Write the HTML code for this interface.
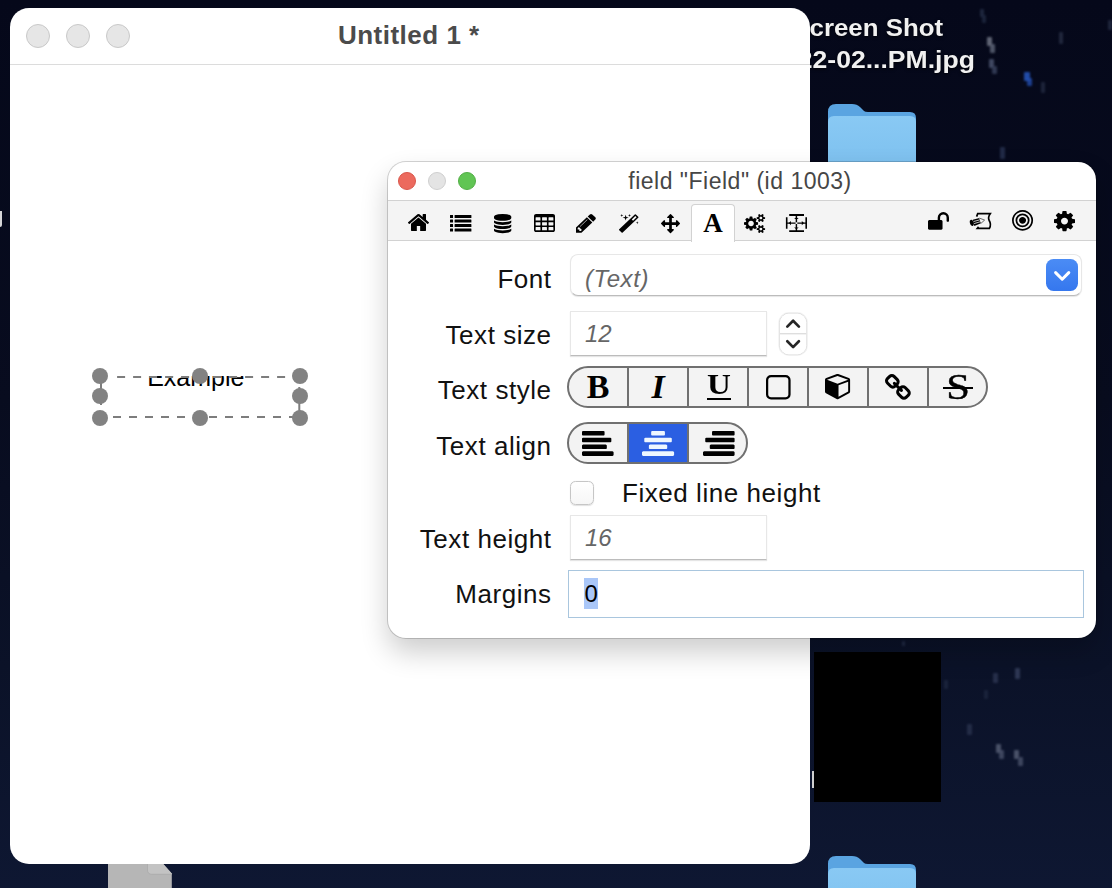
<!DOCTYPE html>
<html lang="en"><head><meta charset="utf-8"><title>Untitled 1 *</title>
<style>
*{box-sizing:border-box;margin:0;padding:0}
html,body{width:1112px;height:888px;overflow:hidden}
body{background:linear-gradient(#05081a 0%,#080c1f 45%,#0b1228 75%,#0e1732 100%);font-family:"Liberation Sans",sans-serif;position:relative}
.abs,.ic{position:absolute;display:block}
.ic{overflow:visible}
.star{position:absolute;background:#3b4560;width:3px;height:5px;opacity:.75;filter:blur(.8px);border-radius:1px}
#main{left:10px;top:8px;width:800px;height:856px;background:#fff;border-radius:19px}
#main .tl{position:absolute;top:16px;width:24px;height:24px;border-radius:50%;background:#e6e6e6;border:1px solid #c9c9c9}
#mtitle{left:-1.2px;top:8px;width:800px;text-align:center;font-weight:bold;font-size:26px;line-height:38px;color:#4b4b4b;letter-spacing:.5px}
#msep{left:0;top:56px;width:800px;height:1px;background:#dcdcdc}
.h{position:absolute;width:16px;height:16px;border-radius:50%;background:#828282}
#insp{left:388px;top:162px;width:708px;height:476px;background:#fff;border-radius:18px;box-shadow:0 0 0 1px rgba(0,0,0,.17),0 14px 28px rgba(0,0,0,.20)}
#insp .tl{position:absolute;top:10px;width:18px;height:18px;border-radius:50%}
#ititle{left:-2px;top:2px;width:708px;text-align:center;font-size:23px;line-height:34px;color:#464646;letter-spacing:.5px}
#tbar{left:0;top:38px;width:708px;height:41px;background:#f4f4f4;border-top:1px solid #d2d2d2;border-bottom:1px solid #d2d2d2}
#tab{left:303px;top:42px;width:44px;height:38px;background:#fff;border:1px solid #d2d2d2;border-bottom:none;border-radius:4px 4px 0 0}
.lbl{position:absolute;right:1112px;white-space:nowrap;font-size:26px;line-height:30px;color:#111;text-align:right;letter-spacing:.55px}
.fld{position:absolute;background:#fff;border:1px solid #e7e7e7;border-bottom-color:#bcbcbc;box-shadow:0 1px 1px rgba(0,0,0,.10)}
.it{position:absolute;font-style:italic;font-size:24px;line-height:28px;color:#666;white-space:nowrap}
.seg{position:absolute;background:#f3f3f3;border:2px solid #707070;border-radius:21px;overflow:hidden}
.div{position:absolute;top:0;width:2px;height:100%;background:#707070}
.ser{position:absolute;font-family:"Liberation Serif",serif;color:#000;white-space:nowrap;text-align:center}
</style></head><body>

<div class="star" style="left:980px;top:9px;width:4px;height:8px;background:#263049"></div>
<div class="star" style="left:982px;top:15px;width:4px;height:8px;background:#222c44"></div>
<div class="star" style="left:986.5px;top:37px;width:5px;height:9px;background:#7d8392"></div>
<div class="star" style="left:990px;top:44px;width:5px;height:9px;background:#666d80"></div>
<div class="star" style="left:989px;top:59px;width:5px;height:9px;background:#525c78"></div>
<div class="star" style="left:992px;top:66px;width:5px;height:8px;background:#3d4763"></div>
<div class="star" style="left:1023.6px;top:71.5px;width:6px;height:9px;background:#2b62d6"></div>
<div class="star" style="left:1027px;top:78px;width:5px;height:8px;background:#2450b4"></div>
<div class="star" style="left:1059px;top:32px;width:4px;height:12px;background:#2a3148"></div>
<div class="star" style="left:1041px;top:82px;width:4px;height:11px;background:#252d45"></div>
<div class="star" style="left:1000px;top:147px;width:5px;height:12px;background:#2a3555"></div>
<div class="star" style="left:1108px;top:20px;width:4px;height:10px;background:#262e46"></div>
<div class="star" style="left:902px;top:641px;width:3px;height:5px;background:#2a3350"></div>
<div class="star" style="left:993px;top:673px;width:5px;height:10px;background:#303956"></div>
<div class="star" style="left:1014.5px;top:668px;width:5px;height:11px;background:#3a4463"></div>
<div class="star" style="left:944px;top:680px;width:4px;height:9px;background:#1f2841"></div>
<div class="star" style="left:967px;top:724px;width:5px;height:11px;background:#2b3450"></div>
<div class="star" style="left:996px;top:744px;width:5px;height:9px;background:#5e667c"></div>
<div class="star" style="left:999px;top:750px;width:5px;height:9px;background:#4c556e"></div>
<div class="star" style="left:1014px;top:750px;width:5px;height:9px;background:#5e667c"></div>
<div class="star" style="left:1018px;top:757px;width:5px;height:9px;background:#4c556e"></div>
<div class="star" style="left:984px;top:690px;width:4px;height:9px;background:#1f2841"></div>
<div class="abs" id="dl1" style="right:169.3px;top:13px;text-align:right;font-weight:bold;font-size:23.5px;line-height:30px;color:#f1f1f1;white-space:nowrap;text-shadow:0 1px 3px rgba(0,0,0,.8);transform:scaleX(1.1);transform-origin:100% 50%">Screen Shot</div>
<div class="abs" id="dl2" style="right:137.4px;top:45px;text-align:right;font-weight:bold;font-size:23.5px;line-height:30px;color:#f1f1f1;white-space:nowrap;text-shadow:0 1px 3px rgba(0,0,0,.8);transform:scaleX(1.13);transform-origin:100% 50%">2022-02...PM.jpg</div>

<svg class="ic" style="left:828px;top:104px" width="88" height="72" viewBox="0 0 88 72">
<defs><linearGradient id="fg104" x1="0" y1="0" x2="0" y2="1"><stop offset="0" stop-color="#89c9f4"/><stop offset="1" stop-color="#7bbfee"/></linearGradient></defs>
<path d="M0 8 Q0 0 8 0 L24 0 Q29 0 32 3 L36 7 Q37 8 40 8 L82 8 Q88 8 88 14 L88 72 L0 72 Z" fill="#5aa4e1"/>
<path d="M0 18 Q0 12 6 12 L82 12 Q88 12 88 18 L88 72 L0 72 Z" fill="url(#fg104)"/></svg>
<svg class="ic" style="left:828px;top:856px" width="88" height="72" viewBox="0 0 88 72">
<defs><linearGradient id="fg856" x1="0" y1="0" x2="0" y2="1"><stop offset="0" stop-color="#89c9f4"/><stop offset="1" stop-color="#7bbfee"/></linearGradient></defs>
<path d="M0 8 Q0 0 8 0 L24 0 Q29 0 32 3 L36 7 Q37 8 40 8 L82 8 Q88 8 88 14 L88 72 L0 72 Z" fill="#5aa4e1"/>
<path d="M0 18 Q0 12 6 12 L82 12 Q88 12 88 18 L88 72 L0 72 Z" fill="url(#fg856)"/></svg>
<div class="abs" style="left:814px;top:652px;width:127px;height:150px;background:#000"></div>
<div class="abs" style="left:812px;top:771px;width:2px;height:17px;background:#cfcfcf"></div>
<div class="abs" style="left:0;top:211px;width:2.2px;height:16px;background:#d6d6d8;border-radius:0 0 2px 0"></div>
<svg class="ic" style="left:108px;top:858px" width="64" height="30" viewBox="0 0 64 30"><path d="M0 0 L49.9 0 L63.8 15.4 L63.8 30 L0 30 Z" fill="#b6b6b6"/><path d="M39.5 0 L39.5 12 Q39.5 16.3 44 16.3 L63.8 16.3 L63.8 15.4 L49.9 0 Z" fill="#c3c3c3"/><path d="M39.5 0 L39.5 12 Q39.5 16.3 44 16.3 L63.8 16.3" fill="none" stroke="#a9a9a9" stroke-width=".8"/></svg>
<div class="abs" id="main">
<div class="tl" style="left:16px"></div>
<div class="tl" style="left:56px"></div>
<div class="tl" style="left:96px"></div>
<div class="abs" id="mtitle">Untitled 1 *</div><div class="abs" id="msep"></div>
<div class="abs" style="left:90px;top:368.3px;width:200px;height:16px;overflow:hidden"><div id="ex" style="position:absolute;left:-4.2px;width:200px;top:-13px;text-align:center;font-size:25px;line-height:28px;color:#000">Example</div></div>
<svg class="ic" style="left:80px;top:358px" width="220" height="62" viewBox="80 358 220 62"><g stroke="#7d7d7d" stroke-width="2" fill="none">
<path d="M107.1 369 H290" stroke-dasharray="8 8"/><path d="M103 409 H290" stroke-dasharray="8 8"/>
<path d="M91 373 V381 M91 389 V397 M289.3 379 V387 M289.3 395 V403"/></g></svg>
<div class="h" style="left:82px;top:360px"></div>
<div class="h" style="left:82px;top:380px"></div>
<div class="h" style="left:82px;top:402px"></div>
<div class="h" style="left:182px;top:360px"></div>
<div class="h" style="left:182px;top:402px"></div>
<div class="h" style="left:282px;top:360px"></div>
<div class="h" style="left:282px;top:380px"></div>
<div class="h" style="left:282px;top:402px"></div>
</div>
<div class="abs" id="insp">
<div class="tl" style="left:10px;background:#ec6a5e;border:1px solid #d9564b"></div><div class="tl" style="left:40px;background:#e4e4e4;border:1px solid #cfcfcf"></div><div class="tl" style="left:70px;background:#61c554;border:1px solid #52ae46"></div>
<div class="abs" id="ititle">field "Field" (id 1003)</div>
<div class="abs" id="tbar"></div><div class="abs" id="tab"></div>
</div>
<svg class="ic" style="left:407.90px;top:214.40px" width="21.00" height="17.00" viewBox="25.9 -1283.0 1612.2 1283.0" preserveAspectRatio="none"><path transform="scale(1,-1)" fill="#000" d="M1408 544v-480q0 -26 -19 -45t-45 -19h-384v384h-256v-384h-384q-26 0 -45 19t-19 45v480q0 1 0.5 3t0.5 3l575 474l575 -474q1 -2 1 -6zM1631 613l-62 -74q-8 -9 -21 -11h-3q-13 0 -21 7l-692 577l-692 -577q-12 -8 -24 -7q-13 2 -21 11l-62 74q-8 10 -7 23.5t11 21.5 l719 599q32 26 76 26t76 -26l244 -204v195q0 14 9 23t23 9h192q14 0 23 -9t9 -23v-408l219 -182q10 -8 11 -21.5t-7 -23.5z"/></svg>
<svg class="ic" style="left:449.80px;top:214.70px" width="21.40" height="16.60" viewBox="0.0 -1408.0 1792.0 1408.0" preserveAspectRatio="none"><path transform="scale(1,-1)" fill="#000" d="M256 224v-192q0 -13 -9.5 -22.5t-22.5 -9.5h-192q-13 0 -22.5 9.5t-9.5 22.5v192q0 13 9.5 22.5t22.5 9.5h192q13 0 22.5 -9.5t9.5 -22.5zM256 608v-192q0 -13 -9.5 -22.5t-22.5 -9.5h-192q-13 0 -22.5 9.5t-9.5 22.5v192q0 13 9.5 22.5t22.5 9.5h192q13 0 22.5 -9.5 t9.5 -22.5zM256 992v-192q0 -13 -9.5 -22.5t-22.5 -9.5h-192q-13 0 -22.5 9.5t-9.5 22.5v192q0 13 9.5 22.5t22.5 9.5h192q13 0 22.5 -9.5t9.5 -22.5zM1792 224v-192q0 -13 -9.5 -22.5t-22.5 -9.5h-1344q-13 0 -22.5 9.5t-9.5 22.5v192q0 13 9.5 22.5t22.5 9.5h1344 q13 0 22.5 -9.5t9.5 -22.5zM256 1376v-192q0 -13 -9.5 -22.5t-22.5 -9.5h-192q-13 0 -22.5 9.5t-9.5 22.5v192q0 13 9.5 22.5t22.5 9.5h192q13 0 22.5 -9.5t9.5 -22.5zM1792 608v-192q0 -13 -9.5 -22.5t-22.5 -9.5h-1344q-13 0 -22.5 9.5t-9.5 22.5v192q0 13 9.5 22.5 t22.5 9.5h1344q13 0 22.5 -9.5t9.5 -22.5zM1792 992v-192q0 -13 -9.5 -22.5t-22.5 -9.5h-1344q-13 0 -22.5 9.5t-9.5 22.5v192q0 13 9.5 22.5t22.5 9.5h1344q13 0 22.5 -9.5t9.5 -22.5zM1792 1376v-192q0 -13 -9.5 -22.5t-22.5 -9.5h-1344q-13 0 -22.5 9.5t-9.5 22.5v192 q0 13 9.5 22.5t22.5 9.5h1344q13 0 22.5 -9.5t9.5 -22.5z"/></svg>
<svg class="ic" style="left:493.70px;top:213.50px" width="17.30" height="19.20" viewBox="0.0 -1536.0 1536.0 1792.0" preserveAspectRatio="none"><path transform="scale(1,-1)" fill="#000" d="M768 768q237 0 443 43t325 127v-170q0 -69 -103 -128t-280 -93.5t-385 -34.5t-385 34.5t-280 93.5t-103 128v170q119 -84 325 -127t443 -43zM768 0q237 0 443 43t325 127v-170q0 -69 -103 -128t-280 -93.5t-385 -34.5t-385 34.5t-280 93.5t-103 128v170q119 -84 325 -127 t443 -43zM768 384q237 0 443 43t325 127v-170q0 -69 -103 -128t-280 -93.5t-385 -34.5t-385 34.5t-280 93.5t-103 128v170q119 -84 325 -127t443 -43zM768 1536q208 0 385 -34.5t280 -93.5t103 -128v-128q0 -69 -103 -128t-280 -93.5t-385 -34.5t-385 34.5t-280 93.5 t-103 128v128q0 69 103 128t280 93.5t385 34.5z"/></svg>
<svg class="ic" style="left:534.00px;top:214.00px" width="21.00" height="18.00" viewBox="0.0 -1408.0 1664.0 1408.0" preserveAspectRatio="none"><path transform="scale(1,-1)" fill="#000" d="M512 160v192q0 14 -9 23t-23 9h-320q-14 0 -23 -9t-9 -23v-192q0 -14 9 -23t23 -9h320q14 0 23 9t9 23zM512 544v192q0 14 -9 23t-23 9h-320q-14 0 -23 -9t-9 -23v-192q0 -14 9 -23t23 -9h320q14 0 23 9t9 23zM1024 160v192q0 14 -9 23t-23 9h-320q-14 0 -23 -9t-9 -23 v-192q0 -14 9 -23t23 -9h320q14 0 23 9t9 23zM512 928v192q0 14 -9 23t-23 9h-320q-14 0 -23 -9t-9 -23v-192q0 -14 9 -23t23 -9h320q14 0 23 9t9 23zM1024 544v192q0 14 -9 23t-23 9h-320q-14 0 -23 -9t-9 -23v-192q0 -14 9 -23t23 -9h320q14 0 23 9t9 23zM1536 160v192 q0 14 -9 23t-23 9h-320q-14 0 -23 -9t-9 -23v-192q0 -14 9 -23t23 -9h320q14 0 23 9t9 23zM1024 928v192q0 14 -9 23t-23 9h-320q-14 0 -23 -9t-9 -23v-192q0 -14 9 -23t23 -9h320q14 0 23 9t9 23zM1536 544v192q0 14 -9 23t-23 9h-320q-14 0 -23 -9t-9 -23v-192 q0 -14 9 -23t23 -9h320q14 0 23 9t9 23zM1536 928v192q0 14 -9 23t-23 9h-320q-14 0 -23 -9t-9 -23v-192q0 -14 9 -23t23 -9h320q14 0 23 9t9 23zM1664 1248v-1088q0 -66 -47 -113t-113 -47h-1344q-66 0 -113 47t-47 113v1088q0 66 47 113t113 47h1344q66 0 113 -47t47 -113 z"/></svg>
<svg class="ic" style="left:576.40px;top:213.70px" width="19.80" height="18.70" viewBox="0.0 -1387.0 1515.0 1515.0" preserveAspectRatio="none"><path transform="scale(1,-1)" fill="#000" d="M363 0l91 91l-235 235l-91 -91v-107h128v-128h107zM886 928q0 22 -22 22q-10 0 -17 -7l-542 -542q-7 -7 -7 -17q0 -22 22 -22q10 0 17 7l542 542q7 7 7 17zM832 1120l416 -416l-832 -832h-416v416zM1515 1024q0 -53 -37 -90l-166 -166l-416 416l166 165q36 38 90 38 q53 0 91 -38l235 -234q37 -39 37 -91z"/></svg>
<svg class="ic" style="left:618.50px;top:213.70px" width="19.80" height="18.70" viewBox="27.0 -1536.0 1637.0 1637.0" preserveAspectRatio="none"><path transform="scale(1,-1)" fill="#000" d="M1190 955l293 293l-107 107l-293 -293zM1637 1248q0 -27 -18 -45l-1286 -1286q-18 -18 -45 -18t-45 18l-198 198q-18 18 -18 45t18 45l1286 1286q18 18 45 18t45 -18l198 -198q18 -18 18 -45zM286 1438l98 -30l-98 -30l-30 -98l-30 98l-98 30l98 30l30 98zM636 1276 l196 -60l-196 -60l-60 -196l-60 196l-196 60l196 60l60 196zM1566 798l98 -30l-98 -30l-30 -98l-30 98l-98 30l98 30l30 98zM926 1438l98 -30l-98 -30l-30 -98l-30 98l-98 30l98 30l30 98z"/></svg>
<svg class="ic" style="left:661.00px;top:213.70px" width="19.00" height="19.20" viewBox="0.0 -1536.0 1792.0 1792.0" preserveAspectRatio="none"><path transform="scale(1,-1)" fill="#000" d="M1792 640q0 -26 -19 -45l-256 -256q-19 -19 -45 -19t-45 19t-19 45v128h-384v-384h128q26 0 45 -19t19 -45t-19 -45l-256 -256q-19 -19 -45 -19t-45 19l-256 256q-19 19 -19 45t19 45t45 19h128v384h-384v-128q0 -26 -19 -45t-45 -19t-45 19l-256 256q-19 19 -19 45 t19 45l256 256q19 19 45 19t45 -19t19 -45v-128h384v384h-128q-26 0 -45 19t-19 45t19 45l256 256q19 19 45 19t45 -19l256 -256q19 -19 19 -45t-19 -45t-45 -19h-128v-384h384v128q0 26 19 45t45 19t45 -19l256 -256q19 -19 19 -45z"/></svg>
<div class="ser" id="tA" style="left:691px;top:205px;width:44px;font-weight:bold;font-size:27px;line-height:36px">A</div>
<svg class="ic" style="left:744.20px;top:213.50px" width="21.10" height="19.00" viewBox="0.0 -1520.0 1920.0 1761.0" preserveAspectRatio="none"><path transform="scale(1,-1)" fill="#000" d="M896 640q0 106 -75 181t-181 75t-181 -75t-75 -181t75 -181t181 -75t181 75t75 181zM1664 128q0 52 -38 90t-90 38t-90 -38t-38 -90q0 -53 37.5 -90.5t90.5 -37.5t90.5 37.5t37.5 90.5zM1664 1152q0 52 -38 90t-90 38t-90 -38t-38 -90q0 -53 37.5 -90.5t90.5 -37.5 t90.5 37.5t37.5 90.5zM1280 731v-185q0 -10 -7 -19.5t-16 -10.5l-155 -24q-11 -35 -32 -76q34 -48 90 -115q7 -11 7 -20q0 -12 -7 -19q-23 -30 -82.5 -89.5t-78.5 -59.5q-11 0 -21 7l-115 90q-37 -19 -77 -31q-11 -108 -23 -155q-7 -24 -30 -24h-186q-11 0 -20 7.5t-10 17.5 l-23 153q-34 10 -75 31l-118 -89q-7 -7 -20 -7q-11 0 -21 8q-144 133 -144 160q0 9 7 19q10 14 41 53t47 61q-23 44 -35 82l-152 24q-10 1 -17 9.5t-7 19.5v185q0 10 7 19.5t16 10.5l155 24q11 35 32 76q-34 48 -90 115q-7 11 -7 20q0 12 7 20q22 30 82 89t79 59q11 0 21 -7 l115 -90q34 18 77 32q11 108 23 154q7 24 30 24h186q11 0 20 -7.5t10 -17.5l23 -153q34 -10 75 -31l118 89q8 7 20 7q11 0 21 -8q144 -133 144 -160q0 -8 -7 -19q-12 -16 -42 -54t-45 -60q23 -48 34 -82l152 -23q10 -2 17 -10.5t7 -19.5zM1920 198v-140q0 -16 -149 -31 q-12 -27 -30 -52q51 -113 51 -138q0 -4 -4 -7q-122 -71 -124 -71q-8 0 -46 47t-52 68q-20 -2 -30 -2t-30 2q-14 -21 -52 -68t-46 -47q-2 0 -124 71q-4 3 -4 7q0 25 51 138q-18 25 -30 52q-149 15 -149 31v140q0 16 149 31q13 29 30 52q-51 113 -51 138q0 4 4 7q4 2 35 20 t59 34t30 16q8 0 46 -46.5t52 -67.5q20 2 30 2t30 -2q51 71 92 112l6 2q4 0 124 -70q4 -3 4 -7q0 -25 -51 -138q17 -23 30 -52q149 -15 149 -31zM1920 1222v-140q0 -16 -149 -31q-12 -27 -30 -52q51 -113 51 -138q0 -4 -4 -7q-122 -71 -124 -71q-8 0 -46 47t-52 68 q-20 -2 -30 -2t-30 2q-14 -21 -52 -68t-46 -47q-2 0 -124 71q-4 3 -4 7q0 25 51 138q-18 25 -30 52q-149 15 -149 31v140q0 16 149 31q13 29 30 52q-51 113 -51 138q0 4 4 7q4 2 35 20t59 34t30 16q8 0 46 -46.5t52 -67.5q20 2 30 2t30 -2q51 71 92 112l6 2q4 0 124 -70 q4 -3 4 -7q0 -25 -51 -138q17 -23 30 -52q149 -15 149 -31z"/></svg>
<svg class="ic" style="left:784px;top:212px" width="26" height="23" viewBox="784 212 26 23"><g stroke="#000" fill="none">
<path d="M789.2 215 H804 M789.2 231.1 H804" stroke-width="1.9"/><path d="M786.7 217.2 V228.8 M806.2 217.2 V228.8" stroke-width="1.6"/>
<path d="M796.4 215 V222.2 M796.4 224 V231 M787 223.1 H795.6 M797.3 223.1 H806" stroke-width="1.45"/></g>
<path d="M794.1 219 L796.4 217.2 L798.7 219 Z M794.1 227.4 L796.4 229.2 L798.7 227.4 Z M791 221 L788.8 223.1 L791 225.2 Z M801.8 221 L804 223.1 L801.8 225.2 Z" fill="#000"/></svg>
<svg class="ic" style="left:927.90px;top:212.00px" width="21.00" height="17.70" viewBox="0.0 -1408.0 1664.0 1408.0" preserveAspectRatio="none"><path transform="scale(1,-1)" fill="#000" d="M1664 960v-256q0 -26 -19 -45t-45 -19h-64q-26 0 -45 19t-19 45v256q0 106 -75 181t-181 75t-181 -75t-75 -181v-192h96q40 0 68 -28t28 -68v-576q0 -40 -28 -68t-68 -28h-960q-40 0 -68 28t-28 68v576q0 40 28 68t68 28h672v192q0 185 131.5 316.5t316.5 131.5 t316.5 -131.5t131.5 -316.5z"/></svg>
<svg class="ic" style="left:960px;top:203px" width="40" height="35" viewBox="0 0 40 35"><path d="M16.6 13.6 L17.7 10.7 H30.2 Q27.6 14.4 29.2 17.5 Q31.6 21.6 29.4 25.3 H17.4 L18.6 23.9" fill="none" stroke="#000" stroke-width="1.7" stroke-linejoin="miter"/>
<ellipse cx="11.8" cy="19.8" rx="1.9" ry="3.2" transform="rotate(-14 11.8 19.8)" fill="#000"/>
<path d="M12.8 16.8 L19.4 15.1 L21 20.3 L14.3 22.9 Z" fill="#000"/>
<path d="M13.6 18.5 L19.9 16.8 M14.1 20.6 L20.4 18.7" stroke="#f4f4f4" stroke-width=".8"/>
<path d="M19.4 15.1 L24.6 17.1 L21 20.3" fill="#f4f4f4" stroke="#444" stroke-width=".8" stroke-linejoin="round"/></svg>
<svg class="ic" style="left:1011.90px;top:210.30px" width="21.10" height="20.70" viewBox="0.0 -1408.0 1536.0 1536.0" preserveAspectRatio="none"><path transform="scale(1,-1)" fill="#000" d="M1024 640q0 -106 -75 -181t-181 -75t-181 75t-75 181t75 181t181 75t181 -75t75 -181zM1152 640q0 159 -112.5 271.5t-271.5 112.5t-271.5 -112.5t-112.5 -271.5t112.5 -271.5t271.5 -112.5t271.5 112.5t112.5 271.5zM1280 640q0 -212 -150 -362t-362 -150t-362 150 t-150 362t150 362t362 150t362 -150t150 -362zM1408 640q0 130 -51 248.5t-136.5 204t-204 136.5t-248.5 51t-248.5 -51t-204 -136.5t-136.5 -204t-51 -248.5t51 -248.5t136.5 -204t204 -136.5t248.5 -51t248.5 51t204 136.5t136.5 204t51 248.5zM1536 640 q0 -209 -103 -385.5t-279.5 -279.5t-385.5 -103t-385.5 103t-279.5 279.5t-103 385.5t103 385.5t279.5 279.5t385.5 103t385.5 -103t279.5 -279.5t103 -385.5z"/></svg>
<svg class="ic" style="left:1053.80px;top:210.80px" width="21.00" height="20.20" viewBox="0.0 -1408.0 1536.0 1536.0" preserveAspectRatio="none"><path transform="scale(1,-1)" fill="#000" d="M1024 640q0 106 -75 181t-181 75t-181 -75t-75 -181t75 -181t181 -75t181 75t75 181zM1536 749v-222q0 -12 -8 -23t-20 -13l-185 -28q-19 -54 -39 -91q35 -50 107 -138q10 -12 10 -25t-9 -23q-27 -37 -99 -108t-94 -71q-12 0 -26 9l-138 108q-44 -23 -91 -38 q-16 -136 -29 -186q-7 -28 -36 -28h-222q-14 0 -24.5 8.5t-11.5 21.5l-28 184q-49 16 -90 37l-141 -107q-10 -9 -25 -9q-14 0 -25 11q-126 114 -165 168q-7 10 -7 23q0 12 8 23q15 21 51 66.5t54 70.5q-27 50 -41 99l-183 27q-13 2 -21 12.5t-8 23.5v222q0 12 8 23t19 13 l186 28q14 46 39 92q-40 57 -107 138q-10 12 -10 24q0 10 9 23q26 36 98.5 107.5t94.5 71.5q13 0 26 -10l138 -107q44 23 91 38q16 136 29 186q7 28 36 28h222q14 0 24.5 -8.5t11.5 -21.5l28 -184q49 -16 90 -37l142 107q9 9 24 9q13 0 25 -10q129 -119 165 -170q7 -8 7 -22 q0 -12 -8 -23q-15 -21 -51 -66.5t-54 -70.5q26 -50 41 -98l183 -28q13 -2 21 -12.5t8 -23.5z"/></svg>
<div class="lbl" style="right:560.4px;top:263.5px">Font</div>
<div class="lbl" style="right:560.4px;top:319.5px">Text size</div>
<div class="lbl" style="right:560.4px;top:375.0px">Text style</div>
<div class="lbl" style="right:560.4px;top:431.0px">Text align</div>
<div class="lbl" style="right:560.4px;top:523.6px">Text height</div>
<div class="lbl" style="right:560.4px;top:579.1px">Margins</div>
<div class="fld" style="left:569.5px;top:254px;width:512.5px;height:41.5px;border-radius:8px"></div>
<div class="it" style="left:585px;top:265px;letter-spacing:.6px">(Text)</div>
<svg class="ic" style="left:1046px;top:259px" width="32" height="32" viewBox="0 0 32 32"><defs><linearGradient id="bg" x1="0" y1="0" x2="0" y2="1"><stop offset="0" stop-color="#4b8cf5"/><stop offset="1" stop-color="#3577ee"/></linearGradient></defs><rect width="32" height="32" rx="7.5" fill="url(#bg)"/><path d="M9.6 13.6 L16.2 20.2 L22.8 13.6" fill="none" stroke="#fff" stroke-width="3" stroke-linecap="round" stroke-linejoin="round"/></svg>
<div class="fld" style="left:569.5px;top:311.3px;width:197px;height:45px"></div>
<div class="it" style="left:585px;top:320px">12</div>
<svg class="ic" style="left:778px;top:312px" width="31" height="45" viewBox="778 312 31 45"><rect x="779.8" y="313.6" width="26.6" height="40.8" rx="9" fill="#fff" stroke="#e3e3e3" stroke-width="1"/><rect x="779.8" y="313.6" width="26.6" height="40.8" rx="9" fill="none" stroke="#000" stroke-opacity=".06" stroke-width="3"/><rect x="779.8" y="313.6" width="26.6" height="40.8" rx="9" fill="#fff"/><path d="M780 333.7 H806.2" stroke="#dedede" stroke-width="1.4"/>
<path d="M787.3 326.6 L793.1 320.8 L798.9 326.6 M787.3 341.3 L793.1 347.1 L798.9 341.3" fill="none" stroke="#262626" stroke-width="2.7" stroke-linecap="round" stroke-linejoin="round"/></svg>
<div class="seg" style="left:567px;top:366px;width:421px;height:42px">
<div class="div" style="left:58px"></div>
<div class="div" style="left:118px"></div>
<div class="div" style="left:178px"></div>
<div class="div" style="left:238px"></div>
<div class="div" style="left:298px"></div>
<div class="div" style="left:358px"></div>
</div>
<div class="ser" style="left:568px;top:366px;width:60px;font-weight:bold;font-size:34px;line-height:42px">B</div>
<div class="ser" style="left:628px;top:366px;width:60px;font-weight:bold;font-style:italic;font-size:34px;line-height:42px">I</div>
<div class="ser" style="left:688.5px;top:362.5px;width:60px;font-weight:bold;font-size:29px;line-height:42px;transform:scaleX(1.14)">U</div><div class="abs" style="left:706.5px;top:397.5px;width:24px;height:2px;background:#000"></div>
<svg class="ic" style="left:765.70px;top:374.90px" width="24.60" height="24.50" viewBox="0.0 -1408.0 1408.0 1408.0" preserveAspectRatio="none"><path transform="scale(1,-1)" fill="#000" d="M1120 1280h-832q-66 0 -113 -47t-47 -113v-832q0 -66 47 -113t113 -47h832q66 0 113 47t47 113v832q0 66 -47 113t-113 47zM1408 1120v-832q0 -119 -84.5 -203.5t-203.5 -84.5h-832q-119 0 -203.5 84.5t-84.5 203.5v832q0 119 84.5 203.5t203.5 84.5h832 q119 0 203.5 -84.5t84.5 -203.5z"/></svg>
<svg class="ic" style="left:825.30px;top:374.20px" width="25.10" height="25.20" viewBox="0.0 -1408.0 1664.0 1664.0" preserveAspectRatio="none"><path transform="scale(1,-1)" fill="#000" d="M896 -93l640 349v636l-640 -233v-752zM832 772l698 254l-698 254l-698 -254zM1664 1024v-768q0 -35 -18 -65t-49 -47l-704 -384q-28 -16 -61 -16t-61 16l-704 384q-31 17 -49 47t-18 65v768q0 40 23 73t61 47l704 256q22 8 44 8t44 -8l704 -256q38 -14 61 -47t23 -73z"/></svg>
<svg class="ic" style="left:885.20px;top:374.00px" width="25.80" height="25.80" viewBox="16.0 -1520.0 1632.0 1632.0" preserveAspectRatio="none"><path transform="scale(1,-1)" fill="#000" d="M1456 320q0 40 -28 68l-208 208q-28 28 -68 28q-42 0 -72 -32q3 -3 19 -18.5t21.5 -21.5t15 -19t13 -25.5t3.5 -27.5q0 -40 -28 -68t-68 -28q-15 0 -27.5 3.5t-25.5 13t-19 15t-21.5 21.5t-18.5 19q-33 -31 -33 -73q0 -40 28 -68l206 -207q27 -27 68 -27q40 0 68 26 l147 146q28 28 28 67zM753 1025q0 40 -28 68l-206 207q-28 28 -68 28q-39 0 -68 -27l-147 -146q-28 -28 -28 -67q0 -40 28 -68l208 -208q27 -27 68 -27q42 0 72 31q-3 3 -19 18.5t-21.5 21.5t-15 19t-13 25.5t-3.5 27.5q0 40 28 68t68 28q15 0 27.5 -3.5t25.5 -13t19 -15 t21.5 -21.5t18.5 -19q33 31 33 73zM1648 320q0 -120 -85 -203l-147 -146q-83 -83 -203 -83q-121 0 -204 85l-206 207q-83 83 -83 203q0 123 88 209l-88 88q-86 -88 -208 -88q-120 0 -204 84l-208 208q-84 84 -84 204t85 203l147 146q83 83 203 83q121 0 204 -85l206 -207 q83 -83 83 -203q0 -123 -88 -209l88 -88q86 88 208 88q120 0 204 -84l208 -208q84 -84 84 -204z"/></svg>
<div class="ser" style="left:928.2px;top:365.8px;width:60px;font-size:35.5px;line-height:42px;-webkit-text-stroke:.4px #000;transform:scaleX(1.2)">S</div><div class="abs" style="left:943px;top:387px;width:29.7px;height:2px;background:#000"></div>
<div class="seg" style="left:567px;top:422px;width:181px;height:42px"><div class="abs" style="left:58px;top:0;width:62px;height:100%;background:#2b5fe2"></div><div class="div" style="left:58px"></div><div class="div" style="left:118px"></div></div>
<svg class="ic" style="left:582.20px;top:430.60px" width="31.60" height="24.90" viewBox="0.0 -1408.0 1792.0 1408.0" preserveAspectRatio="none"><path transform="scale(1,-1)" fill="#000" d="M1792 192v-128q0 -26 -19 -45t-45 -19h-1664q-26 0 -45 19t-19 45v128q0 26 19 45t45 19h1664q26 0 45 -19t19 -45zM1408 576v-128q0 -26 -19 -45t-45 -19h-1280q-26 0 -45 19t-19 45v128q0 26 19 45t45 19h1280q26 0 45 -19t19 -45zM1664 960v-128q0 -26 -19 -45 t-45 -19h-1536q-26 0 -45 19t-19 45v128q0 26 19 45t45 19h1536q26 0 45 -19t19 -45zM1280 1344v-128q0 -26 -19 -45t-45 -19h-1152q-26 0 -45 19t-19 45v128q0 26 19 45t45 19h1152q26 0 45 -19t19 -45z"/></svg>
<svg class="ic" style="left:642.10px;top:430.60px" width="32.10" height="24.90" viewBox="0.0 -1408.0 1792.0 1408.0" preserveAspectRatio="none"><path transform="scale(1,-1)" fill="#eef7ff" d="M1792 192v-128q0 -26 -19 -45t-45 -19h-1664q-26 0 -45 19t-19 45v128q0 26 19 45t45 19h1664q26 0 45 -19t19 -45zM1408 576v-128q0 -26 -19 -45t-45 -19h-896q-26 0 -45 19t-19 45v128q0 26 19 45t45 19h896q26 0 45 -19t19 -45zM1664 960v-128q0 -26 -19 -45t-45 -19 h-1408q-26 0 -45 19t-19 45v128q0 26 19 45t45 19h1408q26 0 45 -19t19 -45zM1280 1344v-128q0 -26 -19 -45t-45 -19h-640q-26 0 -45 19t-19 45v128q0 26 19 45t45 19h640q26 0 45 -19t19 -45z"/></svg>
<svg class="ic" style="left:702.50px;top:430.60px" width="31.60" height="24.90" viewBox="0.0 -1408.0 1792.0 1408.0" preserveAspectRatio="none"><path transform="scale(1,-1)" fill="#000" d="M1792 192v-128q0 -26 -19 -45t-45 -19h-1664q-26 0 -45 19t-19 45v128q0 26 19 45t45 19h1664q26 0 45 -19t19 -45zM1792 576v-128q0 -26 -19 -45t-45 -19h-1280q-26 0 -45 19t-19 45v128q0 26 19 45t45 19h1280q26 0 45 -19t19 -45zM1792 960v-128q0 -26 -19 -45 t-45 -19h-1536q-26 0 -45 19t-19 45v128q0 26 19 45t45 19h1536q26 0 45 -19t19 -45zM1792 1344v-128q0 -26 -19 -45t-45 -19h-1152q-26 0 -45 19t-19 45v128q0 26 19 45t45 19h1152q26 0 45 -19t19 -45z"/></svg>
<div class="abs" style="left:570.2px;top:481.3px;width:23.4px;height:23.4px;border:1px solid #c6c6c6;border-radius:5.5px;background:linear-gradient(#fff,#f6f6f6);box-shadow:0 .5px 1px rgba(0,0,0,.12)"></div>
<div class="abs" id="flh" style="left:622px;top:478px;font-size:26px;line-height:30px;color:#111;white-space:nowrap;letter-spacing:.55px">Fixed line height</div>
<div class="fld" style="left:569.5px;top:515.3px;width:197px;height:45px"></div>
<div class="it" style="left:585px;top:524px">16</div>
<div class="abs" style="left:568px;top:570px;width:515.5px;height:47.5px;background:#fff;border:1px solid #a9c6de"></div>
<div class="abs" style="left:584px;top:578.2px;width:14px;height:31.2px;background:#aac7f8"></div>
<div class="abs" id="m0" style="left:584.6px;top:580px;font-size:24px;line-height:28px;color:#000">0</div>
</body></html>
